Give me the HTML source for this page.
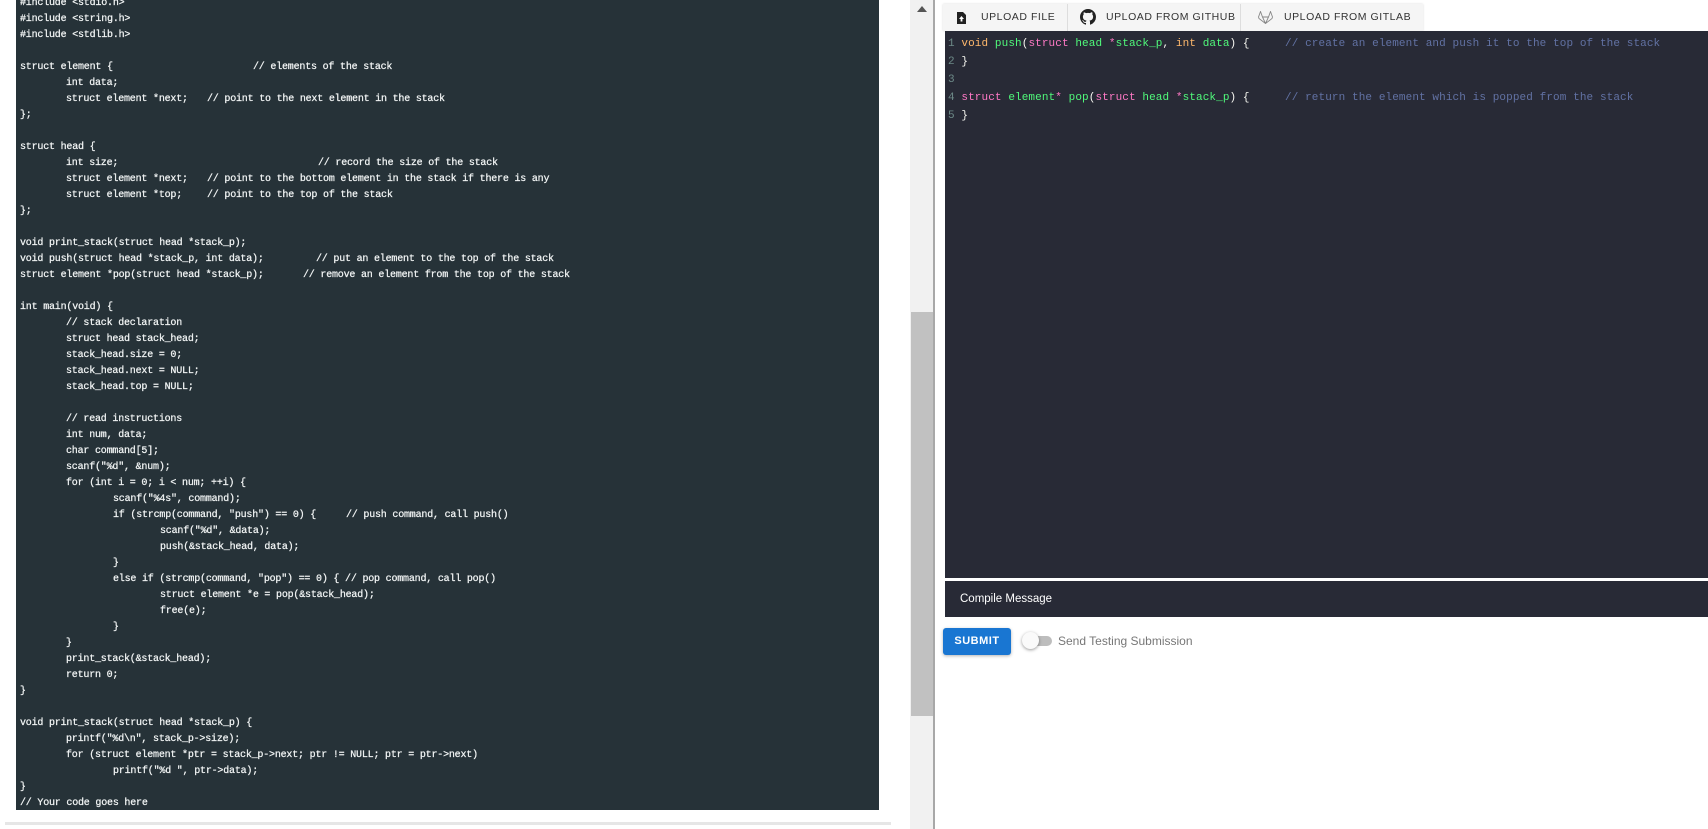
<!DOCTYPE html>
<html><head><meta charset="utf-8"><style>
*{margin:0;padding:0;box-sizing:border-box}
body{width:1708px;height:829px;overflow:hidden;background:#fff;position:relative;font-family:"Liberation Sans",sans-serif}
#code{position:absolute;left:16px;top:0;width:863px;height:810px;background:#263238;overflow:hidden}
.l{position:absolute;left:4px;height:16px;line-height:16px;font-family:"Liberation Mono",monospace;font-size:10px;color:#f2f5f5;white-space:pre;letter-spacing:-0.2px;-webkit-text-stroke:0.25px #f2f5f5}
#track{position:absolute;left:910px;top:0;width:24px;height:829px;background:#f1f1f1}
#thumb{position:absolute;left:911px;top:312px;width:22px;height:404px;background:#c1c1c1}
#arrow{position:absolute;left:917px;top:6px;width:0;height:0;border-left:5px solid transparent;border-right:5px solid transparent;border-bottom:6px solid #555}
#div{position:absolute;left:933px;top:0;width:2px;height:829px;background:#a8a8a8}
#tabs{position:absolute;left:943px;top:4px;width:480px;height:27px;background:#f5f5f5;box-shadow:0 0 2px rgba(0,0,0,.15)}
.tab{position:absolute;top:0;height:27px;line-height:27px;font-size:10.5px;letter-spacing:0.55px;color:#333}
.sep{position:absolute;top:0;width:1px;height:27px;background:#ddd}
#ed{position:absolute;left:945px;top:31px;width:763px;height:547px;background:#282a36}
.e{position:absolute;height:18px;line-height:18px;font-family:"Liberation Mono",monospace;font-size:11px;white-space:pre;color:#f8f8f2;letter-spacing:0.1px}
.n{color:#6d8a88}.o{color:#ffb86c}.g{color:#50fa7b}.p{color:#ff79c6}.c{color:#6272a4}
#cm{position:absolute;left:945px;top:581px;width:763px;height:36px;background:#282a36;color:#fff;font-size:11.5px;line-height:36px;padding-left:15px}
#sub{position:absolute;left:943px;top:628px;width:68px;height:27px;background:#1976d2;color:#fff;font-size:11px;font-weight:bold;letter-spacing:0.5px;text-align:center;line-height:27px;border-radius:3px;box-shadow:0 1px 3px rgba(0,0,0,.3)}
#tgl{position:absolute;left:1028px;top:636px;width:24px;height:10px;border-radius:5px;background:#bdbdbd}
#knob{position:absolute;left:1022px;top:632px;width:17px;height:17px;border-radius:50%;background:#fafafa;box-shadow:0 1px 3px rgba(0,0,0,.4)}
#sts{position:absolute;left:1058px;top:634px;font-size:12px;color:#777}
#hb{position:absolute;left:5px;top:822px;width:886px;height:3px;background:#e6e6e6}
</style></head><body>
<div id="code">
<div class="l" style="top:-4px">#include &lt;stdio.h&gt;</div>
<div class="l" style="top:12px">#include &lt;string.h&gt;</div>
<div class="l" style="top:28px">#include &lt;stdlib.h&gt;</div>
<div class="l" style="top:60px">struct element {</div><div class="l" style="top:60px;left:237px">// elements of the stack</div>
<div class="l" style="top:76px;left:50px">int data;</div>
<div class="l" style="top:92px;left:50px">struct element *next;</div><div class="l" style="top:92px;left:191px">// point to the next element in the stack</div>
<div class="l" style="top:108px">};</div>
<div class="l" style="top:140px">struct head {</div>
<div class="l" style="top:156px;left:50px">int size;</div><div class="l" style="top:156px;left:302px">// record the size of the stack</div>
<div class="l" style="top:172px;left:50px">struct element *next;</div><div class="l" style="top:172px;left:191px">// point to the bottom element in the stack if there is any</div>
<div class="l" style="top:188px;left:50px">struct element *top;</div><div class="l" style="top:188px;left:191px">// point to the top of the stack</div>
<div class="l" style="top:204px">};</div>
<div class="l" style="top:236px">void print_stack(struct head *stack_p);</div>
<div class="l" style="top:252px">void push(struct head *stack_p, int data);</div><div class="l" style="top:252px;left:300px">// put an element to the top of the stack</div>
<div class="l" style="top:268px">struct element *pop(struct head *stack_p);</div><div class="l" style="top:268px;left:287px">// remove an element from the top of the stack</div>
<div class="l" style="top:300px">int main(void) {</div>
<div class="l" style="top:316px;left:50px">// stack declaration</div>
<div class="l" style="top:332px;left:50px">struct head stack_head;</div>
<div class="l" style="top:348px;left:50px">stack_head.size = 0;</div>
<div class="l" style="top:364px;left:50px">stack_head.next = NULL;</div>
<div class="l" style="top:380px;left:50px">stack_head.top = NULL;</div>
<div class="l" style="top:412px;left:50px">// read instructions</div>
<div class="l" style="top:428px;left:50px">int num, data;</div>
<div class="l" style="top:444px;left:50px">char command[5];</div>
<div class="l" style="top:460px;left:50px">scanf("%d", &amp;num);</div>
<div class="l" style="top:476px;left:50px">for (int i = 0; i &lt; num; ++i) {</div>
<div class="l" style="top:492px;left:97px">scanf("%4s", command);</div>
<div class="l" style="top:508px;left:97px">if (strcmp(command, "push") == 0) {</div><div class="l" style="top:508px;left:330px">// push command, call push()</div>
<div class="l" style="top:524px;left:144px">scanf("%d", &amp;data);</div>
<div class="l" style="top:540px;left:144px">push(&amp;stack_head, data);</div>
<div class="l" style="top:556px;left:97px">}</div>
<div class="l" style="top:572px;left:97px">else if (strcmp(command, "pop") == 0) { // pop command, call pop()</div>
<div class="l" style="top:588px;left:144px">struct element *e = pop(&amp;stack_head);</div>
<div class="l" style="top:604px;left:144px">free(e);</div>
<div class="l" style="top:620px;left:97px">}</div>
<div class="l" style="top:636px;left:50px">}</div>
<div class="l" style="top:652px;left:50px">print_stack(&amp;stack_head);</div>
<div class="l" style="top:668px;left:50px">return 0;</div>
<div class="l" style="top:684px">}</div>
<div class="l" style="top:716px">void print_stack(struct head *stack_p) {</div>
<div class="l" style="top:732px;left:50px">printf("%d\n", stack_p-&gt;size);</div>
<div class="l" style="top:748px;left:50px">for (struct element *ptr = stack_p-&gt;next; ptr != NULL; ptr = ptr-&gt;next)</div>
<div class="l" style="top:764px;left:97px">printf("%d ", ptr-&gt;data);</div>
<div class="l" style="top:780px">}</div>
<div class="l" style="top:796px">// Your code goes here</div>
</div>
<div id="hb"></div>
<div id="track"></div><div id="thumb"></div><div id="arrow"></div><div id="div"></div>
<div id="tabs">
<svg style="position:absolute;left:14px;top:8px" width="9" height="12" viewBox="0 0 9 12"><path d="M0 0H6L9 3V12H0Z" fill="#222"/><path d="M4.5 4L2 7H3.6V9.5H5.4V7H7Z" fill="#fff"/></svg>
<div class="tab" style="left:38px">UPLOAD FILE</div>
<div class="sep" style="left:124px"></div>
<svg style="position:absolute;left:137px;top:5px" width="16" height="16" viewBox="0 0 16 16"><path fill="#222" d="M8 0C3.58 0 0 3.58 0 8c0 3.54 2.290 6.530 5.470 7.590.4.07.55-.17.55-.38v-1.33c-2.23.48-2.7-1.07-2.7-1.07-.36-.92-.89-1.17-.89-1.17-.73-.5.06-.49.06-.49.8.06 1.23.83 1.23.83.72 1.22 1.87.87 2.33.66.07-.52.28-.87.5-1.07-1.78-.2-3.64-.89-3.64-3.95 0-.87.31-1.59.82-2.15-.08-.2-.36-1.02.08-2.12 0 0 .67-.21 2.2.82A7.6 7.6 0 0 1 8 3.87c.68 0 1.36.09 2 .27 1.53-1.04 2.2-.82 2.2-.82.44 1.1.16 1.92.08 2.12.51.56.82 1.27.82 2.15 0 3.07-1.87 3.75-3.65 3.95.29.25.54.73.54 1.48v2.2c0 .21.15.46.55.38A8 8 0 0 0 16 8c0-4.42-3.58-8-8-8z"/></svg>
<div class="tab" style="left:163px">UPLOAD FROM GITHUB</div>
<div class="sep" style="left:297px"></div>
<svg style="position:absolute;left:315px;top:7px" width="15" height="13" viewBox="0 0 15 13"><path d="M7.5 12.5L1 7.5 0.5 6 2.5 0.5 4.5 6H10.5L12.5 0.5 14.5 6 14 7.5Z M4.5 6L7.5 12.5 10.5 6" fill="none" stroke="#888" stroke-width="0.9"/></svg>
<div class="tab" style="left:341px">UPLOAD FROM GITLAB</div>
</div>
<div id="ed">
<div class="e" style="left:3px;top:4px"><span class="n">1</span> <span class="o">void</span> <span class="g">push</span>(<span class="p">struct</span> <span class="g">head</span> <span class="p">*</span><span class="g">stack_p</span>, <span class="o">int</span> <span class="g">data</span>) {</div>
<div class="e" style="left:340px;top:4px"><span class="c">// create an element and push it to the top of the stack</span></div>
<div class="e" style="left:3px;top:22px"><span class="n">2</span> }</div>
<div class="e" style="left:3px;top:40px"><span class="n">3</span></div>
<div class="e" style="left:3px;top:58px"><span class="n">4</span> <span class="p">struct</span> <span class="g">element</span><span class="p">*</span> <span class="g">pop</span>(<span class="p">struct</span> <span class="g">head</span> <span class="p">*</span><span class="g">stack_p</span>) {</div>
<div class="e" style="left:340px;top:58px"><span class="c">// return the element which is popped from the stack</span></div>
<div class="e" style="left:3px;top:76px"><span class="n">5</span> }</div>
</div>
<div id="cm">Compile Message</div>
<div id="sub">SUBMIT</div>
<div id="tgl"></div><div id="knob"></div>
<div id="sts">Send Testing Submission</div>
</body></html>
